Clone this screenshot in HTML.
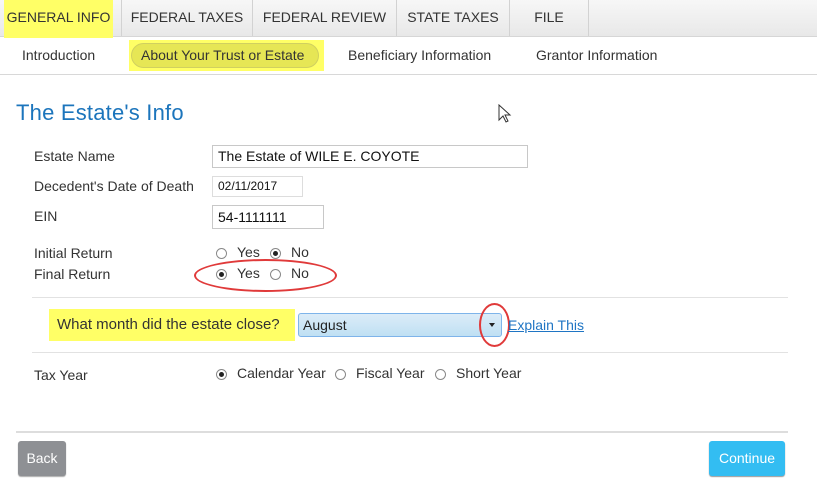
<!DOCTYPE html>
<html><head><style>
*{box-sizing:border-box;margin:0;padding:0}
body{width:817px;height:492px;background:#fff;font-family:"Liberation Sans",Arial,sans-serif;position:relative;overflow:hidden;color:#333}
.abs{position:absolute}
.tabs{left:0;top:0;width:817px;height:37px;background:linear-gradient(#f7f7f7,#e8e8e8);border-bottom:1px solid #d6d6d6}
.tab{position:absolute;top:0;height:36px;line-height:35px;font-size:14px;color:#333;text-align:center;border-right:1px solid #d2d2d2}
.sub{font-size:14px;color:#333;top:47px}
.lbl{font-size:14px;color:#333;left:34px}
.inp{border:1px solid #c8c8c8;font-size:14px;color:#111;padding-left:5px;background:#fff}
.radio{width:11px;height:11px;border:1px solid #888;border-radius:50%;display:inline-block;position:absolute;top:4px;background:#fff}
.radio.on::after{content:"";position:absolute;left:2px;top:2px;width:5px;height:5px;border-radius:50%;background:#222}
.rt{font-size:14px;color:#333;position:absolute}
</style></head><body>
<div class="abs tabs">
 <div class="abs" style="left:4px;top:0;width:109px;height:38px;background:#ffff66;"></div>
 <div class="abs" style="left:4px;top:0;width:109px;height:36px;line-height:35px;font-size:14px;text-align:center;color:#333">GENERAL INFO</div>
 <div class="tab" style="left:121px;width:132px;border-left:1px solid #d2d2d2">FEDERAL TAXES</div>
 <div class="tab" style="left:253px;width:144px">FEDERAL REVIEW</div>
 <div class="tab" style="left:397px;width:113px">STATE TAXES</div>
 <div class="tab" style="left:510px;width:79px">FILE</div>
</div>
<div class="abs" style="left:0;top:74px;width:817px;height:1px;background:#d8d8d8"></div>
<div class="abs" style="left:129px;top:40px;width:195px;height:31px;background:#ffff66"></div>
<div class="abs" style="left:131px;top:43px;width:188px;height:25px;border-radius:13px;background:#e6e655;border:1px solid #d0d060"></div>
<div class="abs sub" style="left:22px">Introduction</div>
<div class="abs sub" style="left:141px">About Your Trust or Estate</div>
<div class="abs sub" style="left:348px">Beneficiary Information</div>
<div class="abs sub" style="left:536px">Grantor Information</div>

<div class="abs" style="left:16px;top:100px;font-size:22px;color:#1c75bc;letter-spacing:0.2px">The Estate's Info</div>
<svg class="abs" style="left:498px;top:104px" width="14" height="20" viewBox="0 0 14 20"><path d="M1 1 L1 16 L5 12 L8 18 L10 17 L7 11 L12 11 Z" fill="#fff" stroke="#333" stroke-width="1"/></svg>

<div class="abs lbl" style="top:148px">Estate Name</div>
<div class="abs inp" style="left:212px;top:145px;width:316px;height:23px;line-height:21px">The Estate of WILE E. COYOTE</div>
<div class="abs lbl" style="top:178px">Decedent's Date of Death</div>
<div class="abs inp" style="left:212px;top:176px;width:91px;height:21px;line-height:19px;font-size:12px;border-color:#ddd">02/11/2017</div>
<div class="abs lbl" style="top:208px">EIN</div>
<div class="abs inp" style="left:212px;top:205px;width:112px;height:24px;line-height:22px">54-1111111</div>

<div class="abs lbl" style="top:245px">Initial Return</div>
<span class="radio abs" style="left:216px;top:248px"></span><span class="rt" style="left:237px;top:244px">Yes</span>
<span class="radio on abs" style="left:270px;top:248px"></span><span class="rt" style="left:291px;top:244px">No</span>
<div class="abs lbl" style="top:266px">Final Return</div>
<span class="radio on abs" style="left:216px;top:269px"></span><span class="rt" style="left:237px;top:265px">Yes</span>
<span class="radio abs" style="left:270px;top:269px"></span><span class="rt" style="left:291px;top:265px">No</span>
<div class="abs" style="left:194px;top:259px;width:143px;height:33px;border:2px solid #e03a3a;border-radius:50%"></div>

<div class="abs" style="left:32px;top:297px;width:756px;height:1px;background:#e2e2e2"></div>
<div class="abs" style="left:49px;top:309px;width:246px;height:32px;background:#ffff66"></div>
<div class="abs" style="left:57px;top:316px;font-size:15px;color:#333">What month did the estate close?</div>
<div class="abs" style="left:298px;top:313px;width:204px;height:24px;border:1px solid #7eb4ea;border-radius:3px;background:linear-gradient(#dcecf8,#bfe0f3);font-size:14px;line-height:22px;padding-left:4px;color:#222">August</div>
<div class="abs" style="left:489px;top:323px;width:0;height:0;border-left:3.5px solid transparent;border-right:3.5px solid transparent;border-top:4px solid #222"></div>
<div class="abs" style="left:479px;top:303px;width:31px;height:44px;border:2px solid #e03a3a;border-radius:50%"></div>
<div class="abs" style="left:508px;top:317px;font-size:14px;color:#1f75c4;text-decoration:underline">Explain This</div>
<div class="abs" style="left:32px;top:352px;width:756px;height:1px;background:#e2e2e2"></div>

<div class="abs lbl" style="top:367px">Tax Year</div>
<span class="radio on abs" style="left:216px;top:369px"></span><span class="rt" style="left:237px;top:365px">Calendar Year</span>
<span class="radio abs" style="left:335px;top:369px"></span><span class="rt" style="left:356px;top:365px">Fiscal Year</span>
<span class="radio abs" style="left:435px;top:369px"></span><span class="rt" style="left:456px;top:365px">Short Year</span>

<div class="abs" style="left:16px;top:431px;width:772px;height:2px;background:#ddd"></div>
<div class="abs" style="left:18px;top:441px;width:48px;height:35px;background:#8e9094;border-radius:3px;color:#fff;font-size:14px;line-height:34px;text-align:center;box-shadow:0 1px 1px #aaa">Back</div>
<div class="abs" style="left:709px;top:441px;width:76px;height:35px;background:#33bdf2;border-radius:3px;color:#fff;font-size:14px;line-height:34px;text-align:center;box-shadow:0 1px 1px #999">Continue</div>
</body></html>
